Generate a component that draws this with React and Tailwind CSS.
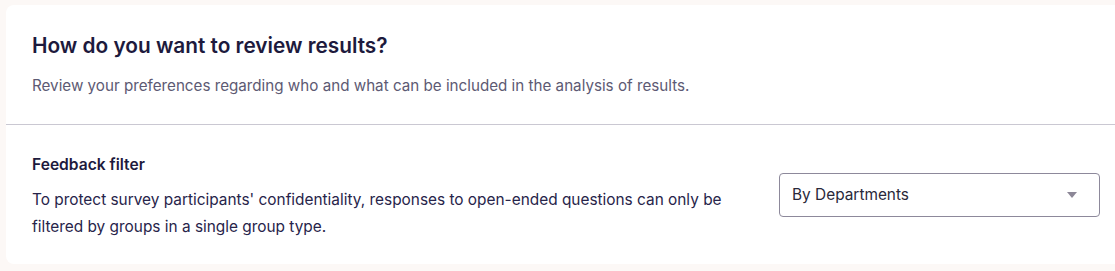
import React from "react"

export default function App() {
  return (
    <div className="min-h-[271px] bg-[#fcf8f6] pt-[5px] pl-[6px] overflow-hidden" style={{ fontFamily: "Inter, 'Noto Sans', sans-serif" }}>
      <div className="w-[1130px] h-[259px] rounded-lg bg-white">
        {/* header */}
        <div className="pl-[26px] pt-[29px] h-[120px] border-b border-[#cac8d2]">
          <h1 className="text-[20.8px] leading-[24px] font-semibold text-[#1d1a3d]">How do you want to review results?</h1>
          <p className="mt-[18px] text-[15.2px] leading-[20px] text-[#5d5a73]">
            Review your preferences regarding who and what can be included in the analysis of results.
          </p>
        </div>

        {/* feedback filter */}
        <div className="flex items-start pl-[26px] pt-[30px]">
          <div className="w-[747px]">
            <h2 className="text-[15.6px] leading-[20px] font-semibold text-[#1d1a3d]">Feedback filter</h2>
            <p className="mt-[11px] w-[710px] text-[15.4px] leading-[27px] text-[#27244a]">
              To protect survey participants' confidentiality, responses to open-ended questions can only be filtered by groups in a single group type.
            </p>
          </div>
          <button className="mt-[18px] flex items-center justify-between w-[321px] h-[44px] px-[12px] border border-[#8d899b] rounded-[4px] bg-white text-[15.4px] text-[#2a283a]">
            <span>By Departments</span>
            <svg width="10" height="6" viewBox="0 0 10 6" className="mr-[10px]">
              <path d="M0 0h10L5 6z" fill="#8c8797" />
            </svg>
          </button>
        </div>
      </div>
    </div>
  )
}
